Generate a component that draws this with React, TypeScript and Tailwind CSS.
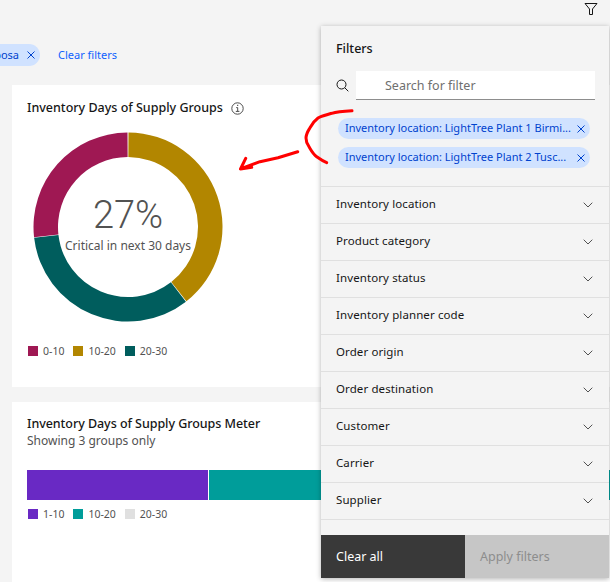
import React from "react";

const FONT = "[font-family:'Noto_Sans','Liberation_Sans',sans-serif]";

function polar(r: number, deg: number) {
  const a = ((deg - 90) * Math.PI) / 180;
  return [100 + r * Math.cos(a), 100 + r * Math.sin(a)];
}
function arc(from: number, to: number) {
  const R = 94.5, r = 70;
  const [x1, y1] = polar(R, from);
  const [x2, y2] = polar(R, to);
  const [x3, y3] = polar(r, to);
  const [x4, y4] = polar(r, from);
  const large = to - from > 180 ? 1 : 0;
  return `M${x1} ${y1}A${R} ${R} 0 ${large} 1 ${x2} ${y2}L${x3} ${y3}A${r} ${r} 0 ${large} 0 ${x4} ${y4}Z`;
}

function Legend({ items }: { items: [string, string][] }) {
  return (
    <div className="flex gap-[9px] text-[10.5px] leading-[12px] text-[#525252] ml-[1px]">
      {items.map(([c, l]) => (
        <div key={l} className="flex items-center gap-[5px]">
          <span className="w-[10px] h-[10px]" style={{ background: c }} />
          <span>{l}</span>
        </div>
      ))}
    </div>
  );
}

function X({ className = "" }: { className?: string }) {
  return (
    <svg width="10" height="10" viewBox="0 0 10 10" className={`flex-none ${className}`} fill="none" stroke="#0043ce" strokeWidth="1">
      <path d="M1.5 1.5l7 7M8.5 1.5l-7 7" />
    </svg>
  );
}

function Chip({ text }: { text: string }) {
  return (
    <div className="h-[21px] w-[252px] rounded-full bg-[#d0e2ff] text-[#0043ce] flex items-center justify-between pl-[7px] pr-[4px] text-[11px]">
      <span className="whitespace-nowrap">{text}</span>
      <X />
    </div>
  );
}

const rows = [
  "Inventory location",
  "Product category",
  "Inventory status",
  "Inventory planner code",
  "Order origin",
  "Order destination",
  "Customer",
  "Carrier",
  "Supplier",
];

export default function App() {
  return (
    <div className={`relative w-[610px] h-[582px] overflow-hidden bg-[#f4f4f4] ${FONT}`}>
      {/* top toolbar */}
      <div className="h-[85px] relative">
        <svg className="absolute left-[584px] top-[2px]" width="14" height="14" viewBox="0 0 14 14" fill="none" stroke="#161616" strokeWidth="1">
          <path d="M1 1.5h12L8.5 7v5.5h-3V7z" />
        </svg>
        <div className="pt-[44px] flex items-center">
          <div className="h-[22px] w-[40px] rounded-r-full bg-[#d0e2ff] text-[#0043ce] text-[11px] flex items-center justify-end pr-[4px] gap-[7px] overflow-hidden whitespace-nowrap">
            <span>posa</span>
            <X />
          </div>
          <span className="ml-[18px] text-[11px] text-[#0f62fe]">Clear filters</span>
        </div>
      </div>

      <div className="pl-[12px] flex flex-col gap-[15px]">
        {/* Donut card */}
        <section className="bg-white h-[302px] pl-[15px] pt-[14px]">
          <div className="flex items-center gap-[8px] h-[18px]">
            <h2 className="text-[12.5px] font-medium text-[#161616]">Inventory Days of Supply Groups</h2>
            <svg width="13" height="13" viewBox="0 0 13 13" fill="none" stroke="#393939">
              <circle cx="6.5" cy="6.5" r="5.7" strokeWidth="0.9" />
              <path d="M5.2 5.6h1.5v3.6M4.8 9.4h3.6" strokeWidth="0.9" />
              <path d="M6.2 3.3h1" strokeWidth="1.2" />
            </svg>
          </div>
          <div className="relative w-[200px] h-[200px] mt-[10px] ml-[1px]">
            <svg width="200" height="200" viewBox="0 0 200 200">
              <path d={arc(0.3, 141.8)} fill="#b28600" />
              <path d={arc(142.2, 263.4)} fill="#005d5d" />
              <path d={arc(263.8, 359.7)} fill="#9f1853" />
            </svg>
            <div className="absolute left-0 top-[66px] w-[200px] text-center">
              <div className="[font-family:Roboto,sans-serif] text-[38px] leading-[45px] font-light text-[#525252]">27%</div>
              <div className="text-[12px] leading-[16px] text-[#525252]">Critical in next 30 days</div>
            </div>
          </div>
          <div className="mt-[18px]">
            <Legend items={[["#9f1853", "0-10"], ["#b28600", "10-20"], ["#005d5d", "20-30"]]} />
          </div>
        </section>

        {/* Meter card */}
        <section className="bg-white h-[180px] pl-[15px] pt-[14px]">
          <h2 className="text-[12.5px] leading-[16px] font-medium text-[#161616] tracking-[-0.05px]">Inventory Days of Supply Groups Meter</h2>
          <p className="text-[12px] leading-[16px] text-[#525252] mt-[1px]">Showing 3 groups only</p>
          <div className="flex gap-[1px] h-[30px] mt-[21px]">
            <div className="w-[181px] bg-[#6929c4]" />
            <div className="flex-1 bg-[#009d9a]" />
          </div>
          <div className="mt-[8px]">
            <Legend items={[["#6929c4", "1-10"], ["#009d9a", "10-20"], ["#e0e0e0", "20-30"]]} />
          </div>
        </section>
      </div>

      {/* Filter panel overlay */}
      <aside className="absolute left-[321px] top-[26px] w-[288px] h-[552px] bg-[#f4f4f4] shadow-[0_1px_5px_rgba(0,0,0,0.3)] flex flex-col">
        <h3 className="pl-[15px] pt-[15px] text-[12.5px] leading-[16px] font-medium text-[#161616]">Filters</h3>
        <div className="flex items-center mt-[14px] pl-[15px]">
          <svg width="13" height="13" viewBox="0 0 13 13" fill="none" stroke="#161616" strokeWidth="1">
            <circle cx="5.5" cy="5.5" r="4.5" />
            <path d="M8.8 8.8l3.5 3.5" />
          </svg>
          <div className="ml-[7px] w-[239px] h-[29px] bg-white border-b border-[#8d8d8d] flex items-center pl-[29px] pt-[2px] text-[12.5px] text-[#6f6f6f]">
            Search for filter
          </div>
        </div>
        <div className="flex flex-col gap-[8px] pl-[17px] mt-[18px]">
          <Chip text="Inventory location: LightTree Plant 1 Birmi..." />
          <Chip text="Inventory location: LightTree Plant 2 Tusc..." />
        </div>
        <div className="mt-[18px] border-t border-[#e0e0e0]">
          {rows.map((r) => (
            <div key={r} className="h-[37px] border-b border-[#e0e0e0] flex items-center justify-between pl-[15px] pr-[16px] text-[11.5px] tracking-[0.1px] text-[#161616]">
              <span className="pb-[2px]">{r}</span>
              <svg width="10" height="6" viewBox="0 0 10 6" fill="none" stroke="#525252" strokeWidth="1">
                <path d="M0.7 0.7l4.3 4.3 4.3-4.3" />
              </svg>
            </div>
          ))}
        </div>
        <div className="mt-auto flex h-[43px] text-[12.5px]">
          <div className="w-[144px] bg-[#393939] text-white flex items-center pl-[15px] pt-[2px]">Clear all</div>
          <div className="w-[144px] bg-[#c6c6c6] text-[#8d8d8d] flex items-center pl-[15px] pt-[2px]">Apply filters</div>
        </div>
      </aside>

      {/* Red hand annotations */}
      <svg className="absolute inset-0 pointer-events-none" width="610" height="582" fill="none" stroke="#f00" strokeWidth="3" strokeLinecap="round" strokeLinejoin="round">
        <path d="M352 110.7C345 111 337 111.5 331.7 113.3C326 115 321 116 318 118C314 121 312 124 310 127.7C308 131 306 134 306 138C306 142 307 144 309 146.7C311 150 313 154 316.7 156.7C320 159 323 161 326.7 162.7" />
        <path d="M297.7 151.7L278 157.7L260 161.7L241.7 168.3M245.7 158.3L240.5 169L251.7 167.3" />
      </svg>
    </div>
  );
}
